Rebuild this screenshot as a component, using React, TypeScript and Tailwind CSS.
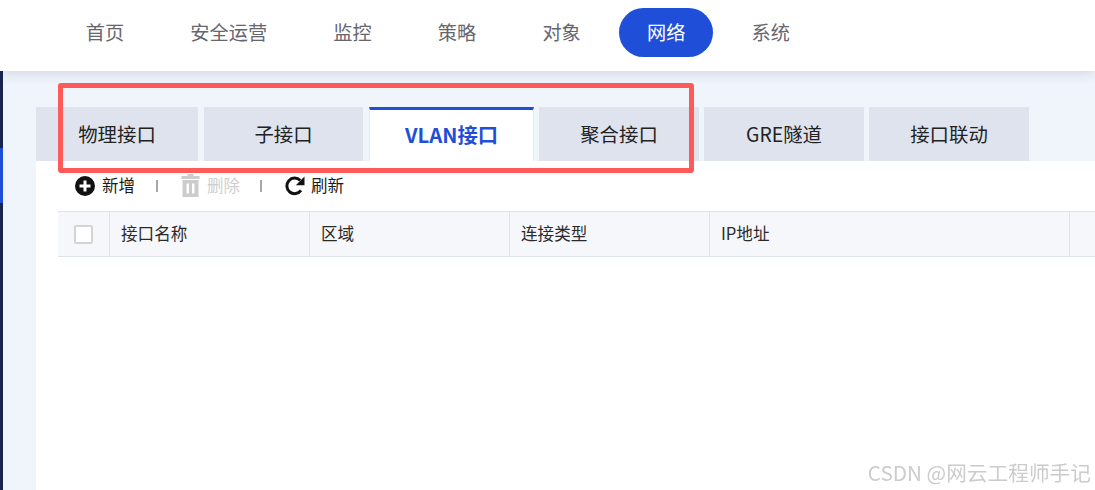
const navItems = ["首页", "安全运营", "监控", "策略", "对象", "网络", "系统"];

const tabs = [
  { name: "物理接口", w: "w-[162px]" },
  { name: "子接口", w: "w-[159px] ml-[6px]" },
  { name: "VLAN接口", w: "w-[165px] ml-[6px]" },
  { name: "聚合接口", w: "w-[160px] ml-[5px]" },
  { name: "GRE隧道", w: "w-[160px] ml-[5px]" },
  { name: "接口联动", w: "w-[160px] ml-[5px]" },
];

const columns = [
  { name: "接口名称", w: "w-[200px]" },
  { name: "区域", w: "w-[200px]" },
  { name: "连接类型", w: "w-[200px]" },
  { name: "IP地址", w: "w-[360px]" },
];

export default function App() {
  return (
    <div
      className="relative flex h-[490px] w-[1095px] flex-col overflow-hidden bg-white text-[#1f1f1f]"
      style={{ fontFamily: '"Noto Sans CJK SC", "Noto Sans", sans-serif' }}
    >
      {/* top nav */}
      <div className="relative z-10 flex h-[71px] shrink-0 items-start gap-[10.6px] bg-white pl-[58px] pt-[8px] shadow-[0_2px_12px_rgba(30,50,100,0.16)]">
        {navItems.map((item) => (
          <div
            key={item}
            className={
              item === "网络"
                ? "flex h-[49px] items-center rounded-full bg-[#1f4fd8] px-[27.8px] pb-[1px] text-[19.2px] text-white"
                : "flex h-[49px] items-center px-[27.8px] pb-[1px] text-[19.2px] text-[#66666e]"
            }
          >
            {item}
          </div>
        ))}
      </div>

      <div className="flex flex-1">
        {/* collapsed side bar */}
        <div className="w-[3px] bg-[#17264d] pt-[77px]">
          <div className="h-[55px] bg-[#1f4fd8]" />
        </div>

        <div className="flex flex-1 flex-col bg-[#f0f4fb] pl-[33px] pt-[36px]">
          {/* tabs */}
          <div className="flex h-[54px]">
            {tabs.map((tab) =>
              tab.name === "VLAN接口" ? (
                <div
                  key={tab.name}
                  className={`${tab.w} flex items-center justify-center border-x border-x-[#e6eaf4] border-t-[3px] border-t-[#1f4fd8] bg-white pb-[3px] text-[20.3px] font-bold text-[#1f4fd8]`}
                >
                  {tab.name}
                </div>
              ) : (
                <div
                  key={tab.name}
                  className={`${tab.w} flex items-center justify-center bg-[#dfe3ee] text-[19.4px] text-[#222222]`}
                >
                  {tab.name}
                </div>
              )
            )}
          </div>

          <div className="flex-1 bg-white pl-[22px]">
            {/* toolbar */}
            <div className="flex h-[50px] items-center pb-[1px] pl-[17px] text-[16.5px]">
              <svg width="20" height="20" viewBox="0 0 20 20" className="mr-[7px]">
                <circle cx="10" cy="10" r="10" fill="#111111" />
                <path d="M10 4.5v11M4.5 10h11" stroke="#ffffff" strokeWidth="3" />
              </svg>
              <span className="pb-[1px] text-[#1a1a1a]">新增</span>
              <span className="ml-[21px] h-[12px] w-[2px] bg-[#a8a8a8]" />
              <svg width="19" height="23" viewBox="0 0 19 23" className="ml-[23px] mr-[7px]">
                <path d="M6.5 0h6v2h6v3H.5V2h6z" fill="#cccccc" />
                <path
                  d="M1.5 6h16v17h-16zM5.5 9.5v10h2.5v-10zM11 9.5v10h2.5v-10z"
                  fill="#cccccc"
                  fillRule="evenodd"
                />
              </svg>
              <span className="pb-[1px] text-[#cfcfcf]">删除</span>
              <span className="ml-[20px] h-[12px] w-[2px] bg-[#a8a8a8]" />
              <svg width="20" height="20" viewBox="0 0 20 20" className="ml-[23px] mr-[6px]">
                <path d="M16 14.4A7.8 7.8 0 1 1 15.2 4.4" fill="none" stroke="#111111" strokeWidth="3" />
                <path d="M19.5 0.5v8.7h-8.7z" fill="#111111" />
              </svg>
              <span className="pb-[1px] text-[#1a1a1a]">刷新</span>
            </div>

            {/* table header */}
            <div className="flex h-[46px] border-y border-[#dfe3ec] bg-[#f6f7fa] text-[16.6px] text-[#2a2a2a]">
              <div className="flex w-[52px] shrink-0 items-center justify-center border-r border-[#dfe3ec] pr-[1px]">
                <div className="h-[19px] w-[19px] rounded-[2px] border-2 border-[#d4d4d4] bg-white" />
              </div>
              {columns.map((col) => (
                <div
                  key={col.name}
                  className={`${col.w} flex shrink-0 items-center border-r border-[#dfe3ec] pb-[2px] pl-[11px]`}
                >
                  {col.name}
                </div>
              ))}
            </div>
          </div>
        </div>
      </div>

      {/* red annotation over the tabs */}
      <div className="absolute left-[58px] top-[83px] z-20 h-[90px] w-[636px] rounded-[3px] border-[5px] border-[#ff5a5a]" />

      {/* watermark */}
      <div className="absolute right-[4px] top-[457px] z-20 text-[20.7px] text-[#cccccc] blur-[0.5px]">
        CSDN @网云工程师手记
      </div>
    </div>
  );
}
